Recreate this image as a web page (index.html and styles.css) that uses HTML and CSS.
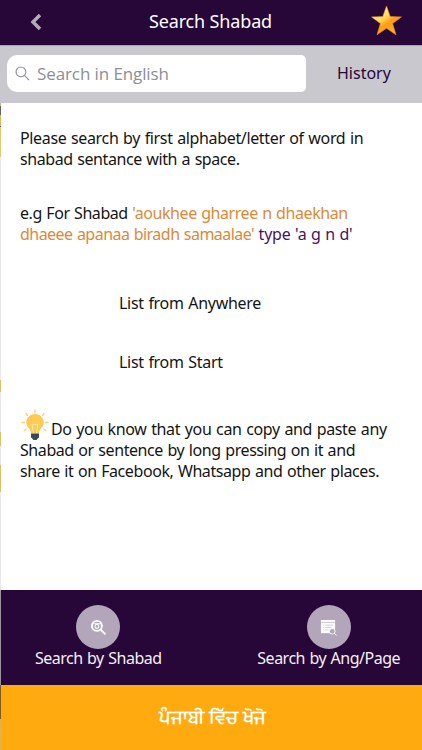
FILE: index.html
```
<!DOCTYPE html>
<html lang="en">
<head>
<meta charset="UTF-8">
<meta name="viewport" content="width=device-width, initial-scale=1.0">
<title>Search Shabad</title>
<link rel="stylesheet" href="styles.css">
</head>
<body>

<div class="app">
    <!-- Header -->
    <header class="header">
        <svg class="back" viewBox="0 0 12 18"><path d="M10 2 L3 9 L10 16"/></svg>
        <h1 class="title">Search Shabad</h1>
        <svg class="star" viewBox="0 0 30 30">
            <defs>
                <linearGradient id="gold" x1="0" y1="0" x2="0.7" y2="1">
                    <stop offset="0" stop-color="#fff6c8"/>
                    <stop offset="0.25" stop-color="#fff0b0"/>
                    <stop offset="0.5" stop-color="#ffd24f"/>
                    <stop offset="0.65" stop-color="#ff9c17"/>
                    <stop offset="1" stop-color="#ffb62b"/>
                </linearGradient>
            </defs>
            <path d="M15 1 L18.6 11.2 L29.5 11.5 L20.9 18 L24.2 28.8 L15 22.6 L5.8 28.8 L9.1 18 L0.5 11.5 L11.4 11.2 Z" fill="url(#gold)" stroke="#e88a16" stroke-width="0.6"/>
        </svg>
    </header>

    <!-- Search bar -->
    <div class="search-bar">
        <div class="search-field">
            <svg class="glass" viewBox="0 0 16 16"><circle cx="6.3" cy="6.3" r="5.2"/><path d="M10 10 L15 15"/></svg>
            <span class="placeholder">Search in English</span>
        </div>
        <span class="history">History</span>
    </div>

    <!-- Help text -->
    <main class="content">
        <p class="intro"><span class="snug">Please search by first alphabet/letter of word in</span><br><span class="tight">shabad sentance with a space.</span></p>
        <p class="example">e.g For Shabad <span class="orange">'aoukhee gharree n dhaekhan</span><br><span class="orange verse">dhaeee apanaa biradh samaalae'</span> <span class="purple">type 'a g n d'</span></p>
        <p class="option anywhere">List from Anywhere</p>
        <p class="option start">List from Start</p>
        <p class="tip"><svg class="bulb" viewBox="0 0 28 32">
                <g stroke="#fbd071" stroke-width="1.3" stroke-linecap="round">
                    <path d="M14 1 V3.5 M5 4.5 L6.5 6.5 M23 4.5 L21.5 6.5 M1 13.5 H3.3 M24.7 13.5 H27 M3.2 21.5 L5 20.3 M24.8 21.5 L23 20.3"/>
                </g>
                <path d="M14 5 C9 5 5.3 8.8 5.3 13.5 C5.3 18 9.8 19.5 10 24.5 H18 C18.2 19.5 22.7 18 22.7 13.5 C22.7 8.8 19 5 14 5 Z" fill="#fdca54"/>
                <path d="M12.6 24 L11 15 L12.7 16.2 L14 15 L15.3 16.2 L17 15 L15.4 24" fill="none" stroke="#fff0b8" stroke-width="0.9"/>
                <path d="M10 24.5 H18 V28 Q18 29 17 29.2 L15.5 31 H12.5 L11 29.2 Q10 29 10 28 Z" fill="#34495e"/>
            </svg><span class="snug">Do you know that you can copy and paste any</span><br><span class="tight">Shabad or sentence by long pressing on it and</span><br><span class="tight">share it on Facebook, Whatsapp and other places.</span></p>
    </main>

    <!-- Bottom actions -->
    <nav class="actions">
        <div class="action">
            <span class="circle">
                <svg viewBox="0 0 16 16">
                    <circle cx="6.5" cy="6.5" r="4.7" fill="none" stroke="#fff" stroke-width="1.8"/>
                    <path d="M10 10 L14.5 14.5" stroke="#fff" stroke-width="1.8"/>
                    <path d="M3 4.5 H10" stroke="#fff" stroke-width="1"/>
                    <circle cx="6.5" cy="7" r="1.8" fill="none" stroke="#fff" stroke-width="1"/>
                </svg>
            </span>
            <span class="label">Search by Shabad</span>
        </div>
        <div class="action">
            <span class="circle">
                <svg viewBox="0 0 18 18">
                    <path d="M1 1 H16 V15 H1 Z" fill="#fff"/>
                    <path d="M1 3.7 H16 M3 6.5 H4.2 M5.5 6.5 H14 M3 9 H4.2 M5.5 9 H12 M3 11.5 H4.2 M5.5 11.5 H9" stroke="#b3a6ba" stroke-width="0.6"/>
                    <circle cx="13" cy="13" r="3" fill="#b3a6ba" stroke="#fff" stroke-width="0.9"/>
                    <path d="M15.1 15.1 L17.5 17.3" stroke="#fff" stroke-width="1"/>
                </svg>
            </span>
            <span class="label">Search by Ang/Page</span>
        </div>
    </nav>

    <footer class="punjabi" lang="pa"><span>ਪੰਜਾਬੀ ਵਿੱਚ ਖੋਜੋ</span></footer>

    <!-- Edge of the screen underneath -->
    <div class="edge"></div>
</div>

</body>
</html>
```
FILE: styles.css
```
* {
    box-sizing: border-box;
}
body {
    margin: 0;
    background: #fff;
    font-family: "Noto Sans", sans-serif;
    font-size: 16px;
    color: #151515;
}
.app {
    position: relative;
    width: 422px;
    height: 750px;
    display: flex;
    flex-direction: column;
    overflow: hidden;
}

/* Header */
.header {
    height: 45px;
    background: #270638;
    display: flex;
    align-items: center;
    justify-content: space-between;
    padding: 0 20px 2px 30px;
}
.back {
    width: 12px;
    height: 18px;
    fill: none;
    stroke: #b4abb9;
    stroke-width: 3.5;
}
.title {
    margin: -2px 0 0 8px;
    font-size: 18px;
    font-weight: 400;
    letter-spacing: -0.15px;
    color: #fff;
}
.star {
    width: 31px;
    height: 31px;
    margin-top: -2px;
}

/* Search bar */
.search-bar {
    height: 58px;
    background: #c9c8ce;
    border-top: 1px solid #aaa3b2;
    display: flex;
    align-items: center;
    padding: 0 0 2px 7px;
}
.search-field {
    width: 299px;
    height: 37px;
    background: #fff;
    border-radius: 10px 5px 5px 10px;
    display: flex;
    align-items: center;
    padding-left: 8px;
}
.glass {
    width: 15px;
    height: 15px;
    fill: none;
    stroke: #8e8e93;
    stroke-width: 1.2;
}
.placeholder {
    margin: -1px 0 0 7px;
    font-family: "Open Sans", sans-serif;
    font-size: 17px;
    letter-spacing: -0.1px;
    color: #8e8e93;
}
.history {
    margin: -1px 0 0 31px;
    color: #270638;
}

/* Help text */
.content {
    height: 487px;
    padding: 25px 0 0 20px;
    line-height: 20.7px;
    white-space: nowrap;
}
.content p {
    margin: 0;
}
.snug {
    letter-spacing: -0.35px;
    word-spacing: 0.8px;
}
.tight {
    letter-spacing: -0.42px;
    word-spacing: 0.8px;
}
.content .example {
    margin-top: 34px;
    letter-spacing: -0.43px;
    word-spacing: 0.7px;
}
.orange {
    color: #dc8938;
}
.verse {
    letter-spacing: -0.53px;
}
.purple {
    color: #481263;
    letter-spacing: -0.25px;
}
.content .option {
    margin-left: 99px;
    letter-spacing: -0.3px;
    word-spacing: 0.8px;
}
.content .anywhere {
    margin-top: 48px;
}
.content .start {
    margin-top: 38px;
}
.content .tip {
    margin-top: 47px;
}
.bulb {
    width: 28px;
    height: 32px;
    margin: -16px 2px -6px 1px;
    vertical-align: baseline;
}

/* Bottom actions */
.actions {
    height: 95px;
    background: #270638;
    display: flex;
    justify-content: space-between;
    padding: 15px 22px 0 35px;
}
.action {
    display: flex;
    flex-direction: column;
    align-items: center;
}
.circle {
    width: 44px;
    height: 44px;
    border-radius: 50%;
    background: #b3a6ba;
    display: flex;
    align-items: center;
    justify-content: center;
}
.circle svg {
    width: 17px;
    height: 17px;
}
.label {
    line-height: 18px;
    letter-spacing: -0.5px;
    word-spacing: 0.8px;
    color: #f4f0f6;
}

.punjabi {
    flex: 1;
    background: #ffab10;
    color: #fff;
    font-size: 18px;
    font-weight: 700;
    display: flex;
    align-items: center;
    justify-content: center;
    padding: 0 0 4px 3px;
}

.edge {
    position: absolute;
    left: 0;
    top: 103px;
    width: 1px;
    height: 647px;
    background: linear-gradient(#c9b98c 0 3px, #6d6258 3px 12px, #dfb85d 12px 23px, #6d6258 23px 24px, #e8c66c 24px 54px, #e9e7ea 54px 277px, #e3bd68 277px 289px, #e9e7ea 289px 329px, #e3bd68 329px 343px, #e9e7ea 343px 362px, #e3bd68 362px 389px, #e9e7ea 389px 487px, #9b93a2 487px 582px, #805a20 582px 616px, #e2b551 616px);
}
```
